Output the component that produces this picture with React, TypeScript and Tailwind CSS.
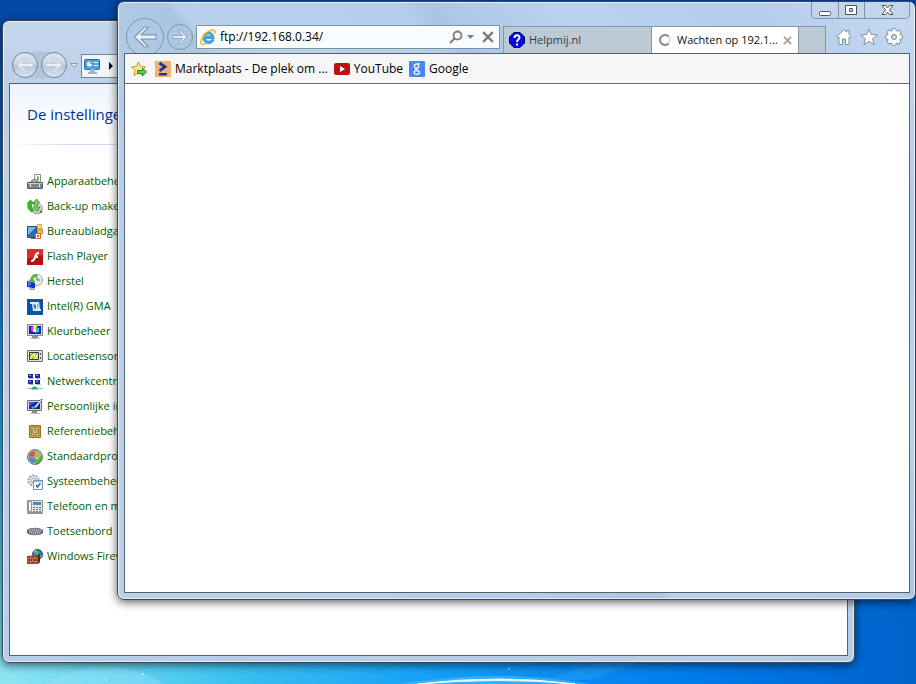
import { useState } from 'react';
import type { ReactNode } from 'react';

/* ---------- 16px item icons ---------- */

function Icon({ children }: { children: ReactNode }) {
  return (
    <svg width="16" height="16" viewBox="0 0 16 16" className="shrink-0" aria-hidden="true">
      {children}
    </svg>
  );
}

const DeviceIcon = () => (
  <Icon>
    <path d="M7.500.5h6v8h-6z" fill="#f7f8f7" stroke="#8b9093" />
    <path d="M10 2l2 1v3l-2 1z" fill="#6fbf4c" />
    <path d="M1 9l2-2h10l2 2z" fill="#b4bbc2" />
    <path d="M5 8V6h5v2" fill="none" stroke="#5f686f" />
    <path d="M.5 8.500h15v6H.5z" fill="#7b858e" stroke="#565f67" />
    <path d="M1 9h14v1H1z" fill="#c9cfd2" />
    <path d="M3 10h1v3H3zM12 10h1v3h-1z" fill="#e8ecee" />
  </Icon>
);

const BackupIcon = () => (
  <Icon>
    <ellipse cx="10" cy="11" rx="5" ry="4" fill="#c3c5c6" stroke="#7c7e80" strokeWidth=".7" />
    <circle cx="12.500" cy="8.500" r="3" fill="#dededc" stroke="#8c8c8c" strokeWidth=".7" />
    <circle cx="12.500" cy="8.500" r="1" fill="#6b5b50" />
    <path d="M5 13C1 11 0 8 1.500 4.500H0L3.500 1 7 4.500H5C4 7 4.500 9 6.500 11z" fill="#3fb92f" stroke="#1d7a18" strokeWidth=".6" />
    <path d="M10 12C7 10 6.500 7 7.500 4H6l3.500-4L13 4h-2c-1 2.500-.5 5 1 6z" fill="#6ed54f" stroke="#1d7a18" strokeWidth=".6" />
    <path d="M13 12h2v2h-2z" fill="#a8564a" />
  </Icon>
);

const GadgetIcon = () => (
  <Icon>
    <path d="M.5 2.500h9v11h-9z" fill="#2671ae" stroke="#1c4e80" />
    <path d="M1 3h8L1 11z" fill="#7fb9de" />
    <path d="M4 14h4v1H4z" fill="#5a6a78" />
    <path d="M10.500.5h4v4h-4z" fill="#ffe07a" stroke="#e2a72a" />
    <path d="M10.500 5.500h5v4h-5z" fill="#ffb84a" stroke="#d98b22" />
    <path d="M8.500 9.500h5v5h-5z" fill="#fff3e9" stroke="#d0603a" />
    <path d="M10 11h2v2h-2z" fill="#e0582c" />
  </Icon>
);

const FlashIcon = () => (
  <Icon>
    <path d="M0 0h16v16H0z" fill="#b80f10" />
    <path d="M0 0h16v6L0 10z" fill="#d5302c" />
    <path d="M12 3C8.500 3 8 5.500 7.200 7.500 6.300 10 5.500 11 4 11v2c3 0 4-2 5-4h2V7H9.800c.5-1.300 1-2 2.200-2z" fill="#fff" />
  </Icon>
);

const RecoveryIcon = () => (
  <Icon>
    <circle cx="10" cy="6" r="5.500" fill="#e6ece8" stroke="#9aaba2" />
    <path d="M10 2.500V6h3" fill="none" stroke="#4e7061" />
    <path d="M6 7C5.500 4 7 2.500 9.500 2.500V.5C5.500.5 3.500 3 4 6H2l3 3.500L8 7z" fill="#62bf3f" stroke="#338a22" strokeWidth=".6" />
    <path d="M0 7l8 2v5.500L0 13z" fill="#1533c8" />
    <path d="M1 8l4 1-4 4z" fill="#4d7cf2" />
    <path d="M3 14l4 .8 1.500 1.200H2z" fill="#9c9f9f" />
  </Icon>
);

const IntelIcon = () => (
  <Icon>
    <path d="M0 0h16v16H0z" fill="#0a55a8" />
    <path d="M3 3h9l1 7h1v2H6L5 5H3z" fill="#dceafa" />
    <path d="M6 5l1.500 5H9V6z" fill="#3b7ac6" />
    <path d="M10 5l.5 4h1L11 5z" fill="#6a9cd8" />
  </Icon>
);

const ColorIcon = () => (
  <Icon>
    <path d="M.5.5h15v11H.5z" fill="#d7d8d6" stroke="#85878b" />
    <path d="M2 2h12v8H2z" fill="#1c1ec4" />
    <path d="M4 3l4-1v6l-4-1z" fill="#e03ad0" />
    <path d="M6 2h4v3H6z" fill="#f7ea4a" />
    <path d="M9 3l3 1v4l-4 1z" fill="#25c4c9" />
    <path d="M6 5h3v3H6z" fill="#f2f5ff" />
    <path d="M5 12h6v2H5z" fill="#8d8f91" />
    <path d="M3 14h10v1H3z" fill="#bdbfc0" />
  </Icon>
);

const LocationIcon = () => (
  <Icon>
    <path d="M.5 1.500h15v11H.5z" fill="#dcdedd" stroke="#6e7274" />
    <path d="M2.500 3.500h9v7h-9z" fill="#e3e66a" stroke="#33383a" />
    <path d="M3 7l3-3M5 10l5-6" stroke="#6f9f3a" />
    <path d="M7 6h2v1H7z" fill="#fff" />
    <path d="M13 4h1v2h-1zM13 8h1v2h-1z" fill="#555" />
  </Icon>
);

const NetworkIcon = () => (
  <Icon>
    {[[1, 0], [8, 0], [1, 6], [8, 6]].map(([x, y]) => (
      <g key={`${x}-${y}`}>
        <rect x={x} y={y} width="5" height="4" fill="#1b25b9" />
        <rect x={x + 1} y={y + 1} width="2" height="1" fill="#8fa9f5" />
        <rect x={x + 1} y={y + 4} width="5" height="1" fill="#b5b7bd" />
      </g>
    ))}
    <path d="M0 14h16v1H0z" fill="#8fcdb8" />
    <path d="M4 15.500l2-3h3l2 3z" fill="#1fb37c" />
  </Icon>
);

const PersonalIcon = () => (
  <Icon>
    <path d="M.5 1.500h14v10H.5z" fill="#d7d8d6" stroke="#6d6f73" />
    <path d="M2 3h11v7H2z" fill="#1320b8" />
    <path d="M2 3h6L2 8z" fill="#2a62e8" />
    <path d="M7 8l7-8h2l-7 9z" fill="#eef2f2" stroke="#2a3a3a" strokeWidth=".5" />
    <path d="M4 8l3-1 1 2-3 1z" fill="#2fc04a" />
    <path d="M5 12h5v2H5z" fill="#8d8f91" />
    <path d="M3 14h10v1H3z" fill="#bdbfc0" />
  </Icon>
);

const CredentialIcon = () => (
  <Icon>
    <path d="M2.500 1.500h11v12h-11z" fill="#c99a41" stroke="#96702c" />
    <path d="M4.500 3.500h7v8h-7z" fill="#e3c57d" stroke="#b08a3c" />
    <circle cx="8" cy="7.500" r="2.500" fill="#f2e7c8" stroke="#7c6436" />
    <circle cx="8" cy="7.500" r="1" fill="#7c7460" />
  </Icon>
);

const DefaultsIcon = () => (
  <Icon>
    <circle cx="8" cy="8" r="7.500" fill="#a9adb0" stroke="#777b7e" />
    <path d="M7.500 7.500V2A6 6 0 0 0 2 7.500z" fill="#e2512a" />
    <path d="M8.500 7.500H14A6 6 0 0 0 8.500 2z" fill="#8fc957" />
    <path d="M7.500 8.500H2A6 6 0 0 0 7.500 14z" fill="#4a86d6" />
    <path d="M8.500 8.500V14A6 6 0 0 0 14 8.500z" fill="#f1c84a" />
    <path d="M8 10.500l2.500 3L15 8" fill="none" stroke="#157a1e" strokeWidth="2.600" />
    <path d="M8 10.500l2.500 3L15 8" fill="none" stroke="#5fd04a" strokeWidth="1.400" />
  </Icon>
);

const AdminIcon = () => (
  <Icon>
    <circle cx="6.500" cy="6.500" r="5" fill="#dce8f2" stroke="#9ab3ca" strokeWidth="2.500" strokeDasharray="2 1.100" />
    <circle cx="6.500" cy="6.500" r="2" fill="#fff" stroke="#8ba5bd" />
    <path d="M6.500 6.500h9v9h-9z" fill="#fff" stroke="#7890a8" />
    <path d="M7 7h8v1H7z" fill="#9db9d4" />
    <path d="M9 11l1.500 2 3-4" fill="none" stroke="#2c5fae" strokeWidth="1.400" />
  </Icon>
);

const PhoneIcon = () => (
  <Icon>
    <path d="M.5 1.500h15v12H.5z" fill="#e3e5e7" stroke="#8d9397" />
    <path d="M1.500 2.500h3v10h-3z" fill="#f5f6f7" stroke="#90969a" />
    <path d="M6 3h8v3H6z" fill="#3b8fc4" />
    <path d="M6 8h2v1H6zM9 8h2v1H9zM12 8h2v1h-2zM6 10h2v1H6zM9 10h2v1H9zM12 10h2v1h-2zM6 12h2v1H6zM9 12h2v1H9zM12 12h2v1h-2z" fill="#6c757b" />
    <path d="M0 14h16v1H0z" fill="#8b9195" />
  </Icon>
);

const KeyboardIcon = () => (
  <Icon>
    <path d="M0 6c4-3 12-3 16 0v3c-3 3-13 3-16 0z" fill="#5b5c6b" />
    <path d="M1 6c4-2 10-2 14 0l-1 3c-3 2-9 2-12 0z" fill="#a4a5b6" />
    <path d="M2 6h12M1 8h14M3 10h10" stroke="#5c5d6e" strokeDasharray="1 1" />
  </Icon>
);

const FirewallIcon = () => (
  <Icon>
    <circle cx="10.500" cy="5.500" r="5" fill="#2b78c8" stroke="#1a4a8c" />
    <path d="M8 2c2-1 4 0 4 2l-2 2-2-1zM12 6h3l-1 3h-2z" fill="#54b548" />
    <path d="M7 2l2-1-1 3z" fill="#b9e2fa" />
    <path d="M0 7l11-1v9H0z" fill="#99402c" />
    <path d="M11 6l2-1v8l-2 2z" fill="#5f2217" />
    <path d="M0 9.500h11M0 12.500h11M3.500 7v2.500M7.500 7v2.500M5.500 10v2.500M3.500 13v2M8.500 13v2" stroke="#d98b70" strokeWidth=".7" />
  </Icon>
);

const panelItems = [
  { label: 'Apparaatbeheer', icon: <DeviceIcon /> },
  { label: 'Back-up maken', icon: <BackupIcon /> },
  { label: 'Bureaubladgadgets', icon: <GadgetIcon /> },
  { label: 'Flash Player', icon: <FlashIcon /> },
  { label: 'Herstel', icon: <RecoveryIcon /> },
  { label: 'Intel(R) GMA', icon: <IntelIcon /> },
  { label: 'Kleurbeheer', icon: <ColorIcon /> },
  { label: 'Locatiesensor', icon: <LocationIcon /> },
  { label: 'Netwerkcentrum', icon: <NetworkIcon /> },
  { label: 'Persoonlijke instellingen', icon: <PersonalIcon /> },
  { label: 'Referentiebeheer', icon: <CredentialIcon /> },
  { label: 'Standaardprogramma\u2019s', icon: <DefaultsIcon /> },
  { label: 'Systeembeheer', icon: <AdminIcon /> },
  { label: 'Telefoon en modem', icon: <PhoneIcon /> },
  { label: 'Toetsenbord', icon: <KeyboardIcon /> },
  { label: 'Windows Firewall', icon: <FirewallIcon /> },
];

/* ---------- browser icons ---------- */

const ExplorerIcon = () => (
  <Icon>
    <path d="M14 9.500H5.500c.2 3 5 3.500 6 1.200H14c-2 5.800-11 5-11-2.200 0-7 11.300-7.500 11 1zM5.500 7h6C11 4.300 6 4.300 5.500 7z" fill="#49aee6" stroke="#1b76bb" strokeWidth=".7" />
    <path d="M1.500 15.200C-1 12 5.500 2 12.500 1c3-.4 3 2 1.700 4" fill="none" stroke="#f2b61c" strokeWidth="1.500" />
    <path d="M1.500 15.200c1.500.8 3.500-.2 5-1.200" fill="none" stroke="#f2b61c" strokeWidth="1.500" />
  </Icon>
);

const AddFavoriteIcon = () => (
  <Icon>
    <path d="M7.500 1l2 4.500 5 .5-3.700 3.300L12 14.500l-4.500-2.700L3 14.500l1.200-5.200L.5 6l5-.5z" fill="#fbe98a" stroke="#c9951f" />
    <path d="M6.500 9.500h5V7.300L15.600 11l-4.100 3.700v-2.200h-5z" fill="#5bd048" stroke="#1d8a24" />
  </Icon>
);

const MarktplaatsIcon = () => (
  <Icon>
    <path d="M0 0h16v16H0z" fill="#efb27c" />
    <path d="M4.500 2L10 5.800 4.500 9.800" fill="none" stroke="#21368b" strokeWidth="2.800" />
    <path d="M4 12h8v2.500H4z" fill="#21368b" />
  </Icon>
);

const YouTubeIcon = () => (
  <Icon>
    <rect y="2" width="16" height="12" rx="2" fill="#b81414" />
    <path d="M6 5l5 3-5 3z" fill="#fff" />
  </Icon>
);

const GoogleIcon = () => (
  <Icon>
    <rect width="16" height="16" rx="1" fill="#4a86f0" />
    <circle cx="7.500" cy="5" r="2.200" fill="none" stroke="#fff" strokeWidth="1.300" />
    <path d="M9 3l2-.5M7.500 7.300c-2 1.200 0 1.700 1.500 2.400" fill="none" stroke="#fff" strokeWidth="1.200" />
    <ellipse cx="7.800" cy="11.500" rx="2.800" ry="1.900" fill="none" stroke="#fff" strokeWidth="1.200" />
  </Icon>
);

const HelpmijIcon = () => (
  <Icon>
    <path d="M5 .5h6L15.500 5v6L11 15.500H5L.5 11V5z" fill="#0505ee" stroke="#000048" />
    <path d="M5.500 6c0-3.500 5-3.500 5-.5C10.500 7.500 8 7.500 8 10" fill="none" stroke="#fff" strokeWidth="2" />
    <path d="M7 11.500h2v2H7z" fill="#fff" />
  </Icon>
);

const ControlPanelIcon = () => (
  <Icon>
    <rect x=".5" y="1.500" width="15" height="10" rx="1" fill="#4aa3df" stroke="#1f6bab" />
    <circle cx="5.500" cy="6" r="2.500" fill="#fff" />
    <path d="M5.500 6V3.500A2.500 2.500 0 0 1 8 6z" fill="#f39a1e" />
    <path d="M10 4.500h4M10 7.500h4" stroke="#fff" />
    <path d="M6 11h5v3H6zM4 14h9v2H4z" fill="#a8b4bc" />
  </Icon>
);

const SpinnerIcon = () => (
  <Icon>
    <circle cx="8" cy="8" r="5" fill="none" stroke="#dcdcdc" strokeWidth="2" />
    <path d="M11.500 4.500A5 5 0 1 0 11.500 11.500" fill="none" stroke="#8b8b8b" strokeWidth="2" />
  </Icon>
);

function Cross({ size, color }: { size: number; color: string }) {
  return (
    <svg width={size} height={size} viewBox="0 0 10 10" aria-hidden="true">
      <path d="M1 1l8 8M9 1L1 9" stroke={color} strokeWidth="2" />
    </svg>
  );
}

/* Hollow arrow used by every back / forward button */
function NavArrow({ size, flip, pale }: { size: number; flip?: boolean; pale?: boolean }) {
  return (
    <svg width={size} height={size} viewBox="0 0 24 24" className={flip ? 'rotate-180' : ''} aria-hidden="true">
      <path
        d="M1.500 12L11.500 2h4L8 9.800h15v4.400H8l7.500 7.800h-4z"
        fill="#e9f0f8"
        stroke={pale ? '#c3d0dd' : '#8796a8'}
        strokeWidth={pale ? 1.5 : 1.2}
        strokeLinejoin="round"
      />
    </svg>
  );
}

const bookmarks = [
  { label: 'Marktplaats - De plek om ...', icon: <MarktplaatsIcon /> },
  { label: 'YouTube', icon: <YouTubeIcon /> },
  { label: 'Google', icon: <GoogleIcon /> },
];

function ControlPanelWindow() {
  return (
    <section
      aria-label="Configuratiescherm"
      className="absolute top-5 right-[61px] bottom-[21px] left-0.5 flex flex-col rounded-[7px] border border-[#3d4650] bg-[linear-gradient(180deg,#c5d8ed_0px,#bcd0e9_60px,#b6cee9_100%)] px-1.5 pb-1.5 shadow-[inset_0_0_0_1px_#e4eef8,0_2px_10px_rgba(0,0,0,0.6)]"
    >
      <div className="flex h-[62px] shrink-0 items-end gap-0.5 pb-[5px] pl-[3px]">
        <div className="flex gap-[3px] rounded-full bg-[#b3c5d9]">
          <button aria-label="Terug" className="grid size-[26px] place-items-center rounded-full border border-[#77899c] bg-[linear-gradient(180deg,#dfe8f1_0%,#cbd7e3_48%,#b3c4d5_52%,#dbe6f0_100%)]">
            <NavArrow size={18} pale />
          </button>
          <button aria-label="Vooruit" className="grid size-[26px] place-items-center rounded-full border border-[#77899c] bg-[linear-gradient(180deg,#dfe8f1_0%,#cbd7e3_48%,#b3c4d5_52%,#dbe6f0_100%)]">
            <NavArrow size={18} flip pale />
          </button>
        </div>
        <svg width="10" height="26" viewBox="0 0 10 26" aria-hidden="true">
          <path d="M1.500 11.500h7l-3.500 4z" fill="#dfe9f4" stroke="#8a9db2" />
        </svg>
        <div className="flex h-[24px] flex-1 items-center gap-2 border border-[#76879a] bg-[#eff5fb] pl-0.5">
          <ControlPanelIcon />
          <svg width="6" height="8" viewBox="0 0 6 8" aria-hidden="true">
            <path d="M1 0l4 4-4 4z" fill="#000" />
          </svg>
        </div>
      </div>

      <div className="flex-1 overflow-hidden border border-[#56616d] bg-white">
        <h1 className="flex h-[60px] items-center bg-[linear-gradient(180deg,#eff4fc_0%,#ffffff_100%)] pl-[17px] text-[15px] text-[#003399]">
          De instellingen
        </h1>
        <div className="h-px bg-[linear-gradient(90deg,#ffffff_0px,#c9dcf2_60px)]" />
        <ul className="pt-6 pl-[17px]">
          {panelItems.map((item) => (
            <li key={item.label} className="flex h-[25px] items-center">
              <a href="#" className="flex items-center gap-1 text-[11px] whitespace-nowrap text-[#006000]">
                {item.icon}
                {item.label}
              </a>
            </li>
          ))}
        </ul>
      </div>
    </section>
  );
}

function BrowserWindow() {
  const [url, setUrl] = useState('ftp://192.168.0.34/');

  return (
    <section
      aria-label="Internet Explorer"
      className="absolute top-px right-0 bottom-[84px] left-[117px] flex flex-col rounded-[7px] border border-[#3d4650] bg-[linear-gradient(50deg,#bdd2e9_0%,#b5cfea_30%,#abc6e1_42%,#b9d2eb_43%,#b5cfe9_60%,#aac6e3_62%,#bad3ed_72%,#b4cdec_86%,#c6daf1_100%)] pr-[5px] pb-1.5 pl-1.5 shadow-[inset_0_0_0_1px_#e4eef8,0_2px_10px_rgba(0,0,0,0.65)]"
    >
      <div className="flex h-[17px] shrink-0 justify-end">
        <div className="flex rounded-b-[5px] border border-t-0 border-[#8192a6] bg-[#c3d5ea]">
          <button aria-label="Minimaliseren" className="grid w-[27px] place-items-center border-r border-[#8192a6]">
            <svg width="13" height="13" viewBox="0 0 13 13" aria-hidden="true">
              <rect x=".5" y="7.500" width="11" height="4" rx="1" fill="#fff" stroke="#50545c" />
            </svg>
          </button>
          <button aria-label="Maximaliseren" className="grid w-[26px] place-items-center border-r border-[#8192a6]">
            <svg width="13" height="13" viewBox="0 0 13 13" aria-hidden="true">
              <path d="M.5 1.500h11v9H.5zM4.500 4.500v3h3v-3z" fill="#fff" fillRule="evenodd" stroke="#50545c" />
            </svg>
          </button>
          <button aria-label="Sluiten" className="grid w-[44px] place-items-center">
            <svg width="13" height="13" viewBox="0 0 13 13" aria-hidden="true">
              <path d="M1 1.500h3.500l2 2.500 2-2.500H12L8.500 6l3.500 4.500H8.500l-2-2.500-2 2.500H1L4.500 6z" fill="#fff" stroke="#50545c" />
            </svg>
          </button>
        </div>
      </div>

      <div className="flex h-[34px] shrink-0 items-center gap-[3px] pt-0.5 pl-0.5">
        <button aria-label="Terug" className="grid size-[38px] shrink-0 place-items-center rounded-full border border-[#8494a7]">
          <NavArrow size={24} />
        </button>
        <button aria-label="Vooruit" className="grid size-[26px] shrink-0 place-items-center rounded-full border border-[#8494a7]">
          <NavArrow size={16} flip />
        </button>
        <div className="flex h-[24px] min-w-0 flex-1 items-center border border-[#7e91a3] bg-[#f9fcfe] pr-[5px] pl-[3px]">
          <ExplorerIcon />
          <input
            aria-label="Adres"
            value={url}
            onChange={(e) => setUrl(e.target.value)}
            className="min-w-0 flex-1 bg-transparent pl-1 text-xs outline-none"
          />
          <button aria-label="Zoeken" className="mr-1">
            <svg width="14" height="14" viewBox="0 0 14 14" aria-hidden="true">
              <circle cx="8.500" cy="5.500" r="4" fill="none" stroke="#7b7b7b" strokeWidth="1.800" />
              <path d="M5.500 8.500L1 13" stroke="#7b7b7b" strokeWidth="2" />
            </svg>
          </button>
          <button aria-label="Zoekopties" className="mr-2">
            <svg width="7" height="4" viewBox="0 0 7 4" aria-hidden="true">
              <path d="M0 0h7L3.500 4z" fill="#7b7b7b" />
            </svg>
          </button>
          <button aria-label="Stoppen">
            <Cross size={12} color="#7b7b7b" />
          </button>
        </div>

        <div role="tablist" className="flex h-[27px] self-end text-[11px]">
          <button role="tab" aria-selected="false" className="flex w-[149px] items-center gap-1 border border-b-0 border-[#8396a8] bg-[#bdc9d4] pl-[5px] text-[#33383d]">
            <HelpmijIcon />
            Helpmij.nl
          </button>
          <div className="flex w-[147px] items-center border-t border-r border-[#8396a8] bg-white pr-1.5 pl-[5px]">
            <button role="tab" aria-selected="true" className="flex min-w-0 flex-1 items-center gap-1 whitespace-nowrap text-[#111111]">
              <SpinnerIcon />
              Wachten op 192.1...
            </button>
            <button aria-label="Tabblad sluiten" className="shrink-0">
              <Cross size={9} color="#a0a0a0" />
            </button>
          </div>
          <button aria-label="Nieuw tabblad" className="w-[27px] border-t border-r border-[#8396a8] bg-[#bdc9d4]" />
        </div>

        <div className="flex gap-[7px] pr-[7px] pl-[6px]">
          <button aria-label="Startpagina">
            <svg width="18" height="18" viewBox="0 0 18 18" aria-hidden="true">
              <path d="M9 1.500L1.500 9l1.200 1.200L4 9v7.500h3.500V11h3v5.500H14V9l1.300 1.200L16.500 9 14 6.500v-4h-2.500V4z" fill="#fff" stroke="#7d90a6" />
            </svg>
          </button>
          <button aria-label="Favorieten">
            <svg width="18" height="18" viewBox="0 0 18 18" aria-hidden="true">
              <path d="M9 1l2.200 5.500 6 .4-4.600 3.900 1.500 5.900L9 13.500l-5.100 3.200 1.500-5.900L.8 6.900l6-.4z" fill="#fff" stroke="#7d90a6" />
            </svg>
          </button>
          <button aria-label="Extra">
            <svg width="18" height="18" viewBox="0 0 18 18" aria-hidden="true">
              {[0, 45, 90, 135, 180, 225, 270, 315].map((angle) => (
                <rect key={angle} x="7" y=".6" width="4" height="5" rx="1" fill="#fff" stroke="#7d90a6" transform={`rotate(${angle} 9 9)`} />
              ))}
              <circle cx="9" cy="9" r="4.500" fill="none" stroke="#fff" strokeWidth="3.500" />
              <circle cx="9" cy="9" r="2.500" fill="#c3d6ec" stroke="#7d90a6" />
            </svg>
          </button>
        </div>
      </div>

      <div className="flex flex-1 flex-col border border-[#56616d] bg-white">
        <nav aria-label="Favorieten" className="flex h-[30px] shrink-0 items-center gap-2 border-b border-[#6c6c6c] bg-[#f6f6f6] pl-1.5 text-xs text-black">
          <button aria-label="Toevoegen aan favorieten">
            <AddFavoriteIcon />
          </button>
          <div className="flex gap-1.5">
            {bookmarks.map((b) => (
              <a key={b.label} href="#" className="flex items-center gap-1 whitespace-nowrap">
                {b.icon}
                {b.label}
              </a>
            ))}
          </div>
        </nav>
        <main className="flex-1" />
      </div>
    </section>
  );
}

/* Wallpaper light arcs along the bottom edge */
function WallpaperGlow() {
  return (
    <svg className="absolute bottom-0 left-0 h-6 w-full" viewBox="0 0 916 24" preserveAspectRatio="none" aria-hidden="true">
      <path d="M45 24Q110-10 165 24z" fill="#9fe6fb" opacity=".35" />
      <path d="M400 24Q500 8 590 24z" fill="#59c3ff" opacity=".5" />
      <path d="M418 24Q500 14 575 24Q500 17 418 24z" fill="#e9faff" stroke="#e9faff" />
      <path d="M545 20L600 2H640L590 20z" fill="#3aa8fb" opacity=".3" />
      <circle cx="106" cy="20" r="1" fill="#c8f4ff" />
      <circle cx="143" cy="14" r="1" fill="#c8f4ff" />
      <circle cx="509" cy="9" r="1" fill="#6fd0ff" />
    </svg>
  );
}

export default function App() {
  return (
    <div className="relative min-h-screen overflow-hidden bg-[radial-gradient(ellipse_110%_110%_at_0%_100%,#8fe6f2_0%,#39c0f0_24%,#129cf8_45%,#0079ea_70%,#0058bd_100%)] font-['Open_Sans','Noto_Sans',sans-serif]">
      <div className="absolute inset-x-0 top-0 h-1/2 bg-[linear-gradient(180deg,#0346a4_0%,#0b62b8_40%,transparent_100%)]" />
      <WallpaperGlow />
      <ControlPanelWindow />
      <BrowserWindow />
    </div>
  );
}
